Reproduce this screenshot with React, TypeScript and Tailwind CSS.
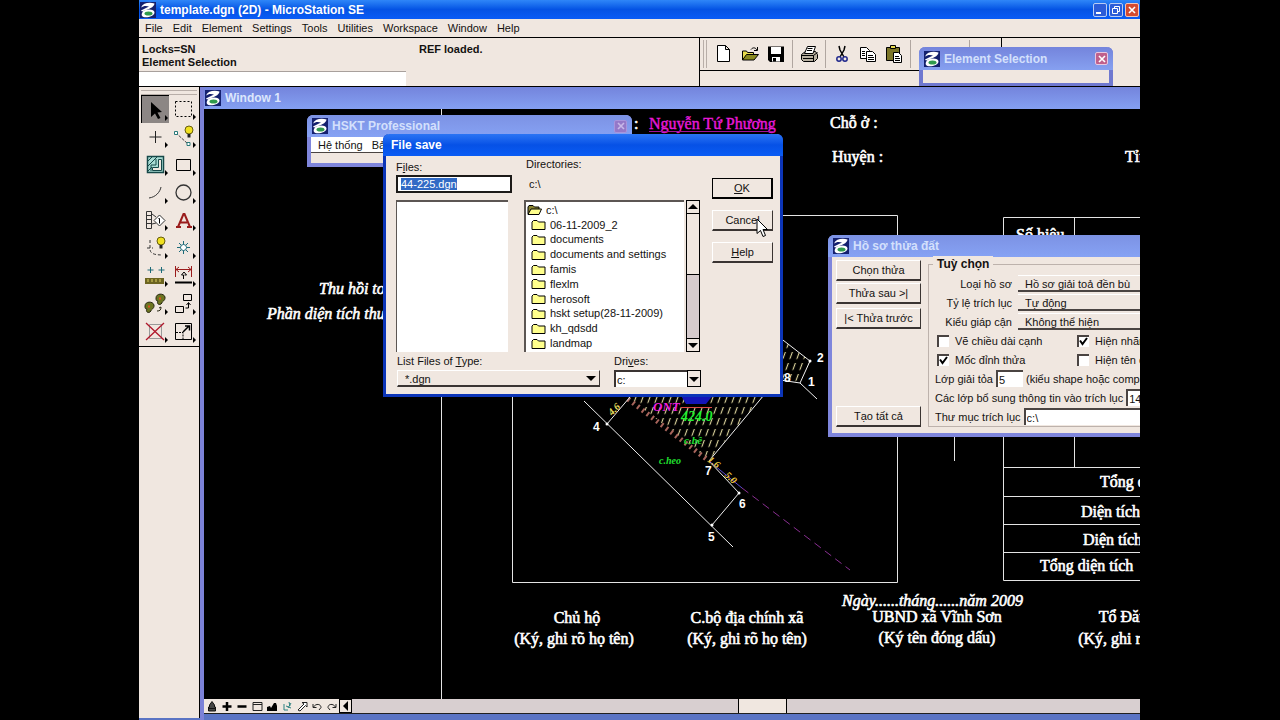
import { useEffect, useRef, useState } from "react";
import type { ReactNode } from "react";

const menus = ["File", "Edit", "Element", "Settings", "Tools", "Utilities", "Workspace", "Window", "Help"];

const folders = [
  "06-11-2009_2",
  "documents",
  "documents and settings",
  "famis",
  "flexlm",
  "herosoft",
  "hskt setup(28-11-2009)",
  "kh_qdsdd",
  "landmap",
];

function Logo() {
  return (
    <svg viewBox="0 0 16 16" className="h-4 w-4 shrink-0" fill="none">
      <rect width="16" height="16" fill="#14206e" />
      <path d="M1 5.500C3 1 9 0 14.500 1.500 14 5.500 9 7 2 9.500L1 8.500 9 4.500C6 3.500 3 4 1 5.500z" fill="#fff" />
      <path d="M4 8.500c5-2 10.500-1 10.500 2 0 3.500-7 5.500-11 4.500-3-1-2-4.500.5-6.500z" fill="#fff" />
      <ellipse cx="8.500" cy="11.500" rx="4" ry="2" fill="#2f9a4c" />
    </svg>
  );
}

function CloseButton({ faded }: { faded?: boolean }) {
  return (
    <button
      aria-label="Close"
      className={
        faded
          ? "flex h-[13px] w-[13px] items-center justify-center rounded-[2px] border border-[#a894dc] bg-[#9478c8]"
          : "flex h-[13px] w-[13px] items-center justify-center rounded-[2px] border border-[#e8c8e0] bg-[#c0608c]"
      }
    >
      <svg viewBox="0 0 8 8" className="h-2 w-2" stroke={faded ? "#c8b8e8" : "#fff"} strokeWidth="1.600">
        <path d="M1 1l6 6M7 1L1 7" />
      </svg>
    </button>
  );
}

function PushButton({ children, heavy }: { children: ReactNode; heavy?: boolean }) {
  return (
    <button
      className={
        heavy
          ? "h-[21px] w-full border border-r-2 border-b-2 border-black bg-[#f0e7e0] text-center"
          : "h-[21px] w-full border border-t-white border-l-white border-r-[#3a3432] border-b-2 border-b-[#3a3432] bg-[#f0e7e0] text-center"
      }
    >
      {children}
    </button>
  );
}

function Folder({ open }: { open?: boolean }) {
  return (
    <svg viewBox="0 0 15 12" className="h-3 w-[15px] shrink-0" stroke="#000" strokeWidth="1">
      {open ? (
        <>
          <path d="M1 10V3l1-1.500h4L7.500 3H12v2" fill="#8a8430" />
          <path d="M1 10.500L4 5h10.500L12 10.500z" fill="#ffff8c" />
        </>
      ) : (
        <path d="M1 10.500V3l1.500-1.500H6L7.500 3H14v7.500z" fill="#ffff8c" />
      )}
    </svg>
  );
}

function Arrow({ d }: { d: string }) {
  return (
    <svg viewBox="0 0 10 10" className="h-[10px] w-[10px] shrink-0" fill="#000">
      <path d={d} />
    </svg>
  );
}

const DOWN = "M0 3h10L5 8z";
const UP = "M0 7h10L5 2z";
const LEFT = "M7 0v10L2 5z";

// Standard toolbar
const toolbar: (null | { name: string; art: ReactNode })[] = [
  { name: "New", art: <path d="M3.500 1.500h8l4 4v12h-12zM11.500 1.500v4h4" fill="#fff" stroke="#000" /> },
  {
    name: "Open",
    art: (
      <g stroke="#000">
        <path d="M2.500 16V7h4l1 1.500h6V11" fill="#e8dc50" />
        <path d="M2.500 16l4-5.500h12L14 16z" fill="#8a8a20" />
        <path d="M11 5.500c2-2.500 4.500-2 6 .5M17.500 3v3.500H14" fill="none" />
      </g>
    ),
  },
  {
    name: "Save",
    art: (
      <g>
        <path d="M2 2.500h16V18H4l-2-2z" fill="#000" />
        <path d="M5 3h10v7H5z" fill="#fff" />
        <path d="M6 13h8v4.500H6z" fill="#fff" />
        <path d="M7 14h3v3.500H7z" fill="#000" />
      </g>
    ),
  },
  null,
  {
    name: "Print",
    art: (
      <g stroke="#000">
        <path d="M2.500 10.500l4-3h10l2 3v4l-3 3h-11l-2-2z" fill="#b8b0a0" />
        <path d="M5.500 9.500l3-7h8l-2.500 7z" fill="#fff" />
        <path d="M8.500 4.500h5M8 6.500h5M2.500 11.500h12l4-3M4 14.500h10M14.500 11.500v6" fill="none" />
      </g>
    ),
  },
  null,
  {
    name: "Cut",
    art: (
      <g fill="none" strokeWidth="1.500">
        <path d="M7 2l1 4 4 7M13 2l-1 4-4 7" stroke="#000" />
        <circle cx="7" cy="15" r="2.200" stroke="#20288c" />
        <circle cx="13" cy="15" r="2.200" stroke="#20288c" />
      </g>
    ),
  },
  {
    name: "Copy",
    art: (
      <g stroke="#000" fill="#fff">
        <path d="M2.500 3.500h6l3 3v8h-9z" />
        <path d="M4 7.500h3M4 9.500h3M4 11.500h3" />
        <path d="M8.500 7.500h6l3 3v7h-9z" />
        <path d="M10 11.500h5M10 13.500h6M10 15.500h6" />
      </g>
    ),
  },
  {
    name: "Paste",
    art: (
      <g stroke="#000">
        <path d="M2.500 3.500h13v13h-13z" fill="#7c7628" />
        <path d="M6.500 1.500h5v3h-5z" fill="#e8dc50" />
        <path d="M9.500 8.500h5l3 3v7h-8z" fill="#fff" />
        <path d="M11 12.500h4M11 14.500h5M11 16.500h5" />
      </g>
    ),
  },
  null,
];

const bulb = (
  <g>
    <circle cx="18" cy="6" r="4" fill="#f0e020" stroke="#665c10" />
    <path d="M16.500 10h3v3.500h-3z" fill="#222" />
  </g>
);

// Main tool frame, two columns read row by row
const tools: { name: string; art: ReactNode }[] = [
  { name: "Element Selection", art: <path d="M8 5l11 10-4.500.5 3 5.500-2.500 1-3-5.500L8 20z" fill="#000" /> },
  { name: "Fence", art: <path d="M4.500 5.500h16v15h-16z" fill="none" stroke="#000" strokeDasharray="2 2" /> },
  { name: "Points", art: <path d="M12.500 7v12M6.500 13h12" stroke="#222" /> },
  {
    name: "Linear Elements",
    art: (
      <g>
        <path d="M5 9l12 11" stroke="#444" strokeDasharray="3 1" />
        <path d="M3.500 7.500h3v3h-3zM16 18.500h3v3h-3z" fill="#fff" stroke="#2a7a7a" />
        {bulb}
      </g>
    ),
  },
  {
    name: "Patterns",
    art: (
      <g fill="none" stroke="#164848">
        <path d="M4.500 4.500h16v16h-16z" fill="#a8dcd4" strokeWidth="1.500" />
        <path d="M4 10l6-6M4 15L15 4M4 20l5-5" />
        <path d="M15.500 7.500h3v11h-9v-3h6z" fill="#f0e7e0" />
        <path d="M13 7v6H8v6" />
      </g>
    ),
  },
  { name: "Polygons", art: <path d="M5.500 7.500h14v11h-14z" fill="none" stroke="#000" /> },
  { name: "Arcs", art: <path d="M18 7c-1 5-5 10-12 11" fill="none" stroke="#333" /> },
  { name: "Ellipses", art: <circle cx="12.500" cy="12.500" r="7.500" fill="none" stroke="#333" strokeWidth="1.300" /> },
  {
    name: "Tags",
    art: (
      <g fill="none" stroke="#333">
        <path d="M3.500 4.500h5v17h-5zM3.500 8.500h5M3.500 12.500h5M3.500 16.500h5M9 7l4 3M9 17l4-1" />
        <path d="M16.500 8l5.500 5.500-5.500 5.500-5.500-5.500z" fill="#fff" />
        <path d="M15.500 11.500h1v5" stroke="#000" />
      </g>
    ),
  },
  {
    name: "Text",
    art: <path d="M7 20l5.500-13h1L19 20M9 15.500h7M5 20h5M16 20h5" fill="none" stroke="#9a1c1c" strokeWidth="2" />,
  },
  {
    name: "Groups",
    art: (
      <g>
        <path d="M7 5v9c0 4 3 6 13 6M4 13h6" fill="none" stroke="#333" strokeDasharray="3 2" />
        {bulb}
      </g>
    ),
  },
  {
    name: "Cells",
    art: (
      <g fill="none" stroke="#1c6a78">
        <path d="M12.500 6v13M6 12.500h13M8 8l9 9M17 8l-9 9" />
        <circle cx="12.500" cy="12.500" r="3" fill="#fff" />
      </g>
    ),
  },
  {
    name: "Measure",
    art: (
      <g>
        <path d="M7.500 4v6M4.500 7h6M18.500 4v6M15.500 7h6" stroke="#1c6a78" />
        <path d="M2 15h19v6H2z" fill="#6c6420" />
        <path d="M5 16v3M9 16v3M13 16v3M17 16v3" stroke="#ddd060" />
      </g>
    ),
  },
  {
    name: "Dimension",
    art: (
      <g fill="none">
        <path d="M4.500 3v11M20.500 3v11M5 6.500h15M8 4L5 6.500 8 9M17 4l3 2.500L17 9" stroke="#9a1c1c" />
        <path d="M4 19.500h17" stroke="#000" strokeWidth="2" />
        <path d="M12.500 16v-4h-2l2.500-3 2.500 3h-2" stroke="#000" />
      </g>
    ),
  },
  {
    name: "Change Attributes",
    art: (
      <g stroke="#282814">
        <path d="M13 7c0-5 8-5 9-1 .5 4-3 4-3 6-2 3-6 1-4-2-2 0-2-1-2-3z" fill="#6c7420" />
        <path d="M2 15c0-5 8-5 9-1 .5 4-3 4-3 6-2 3-6 1-4-2-2 0-2-1-2-3z" fill="#6c7420" />
        <path d="M5 15.500h2M16 7.500h2" stroke="#e05020" strokeWidth="2" />
        <path d="M14 20c3 0 4-1 4-4l-2 1" fill="none" />
      </g>
    ),
  },
  {
    name: "Manipulate",
    art: (
      <g fill="none" stroke="#000">
        <path d="M12.500 3.500h8v6h-8zM4.500 15.500h8v6h-8z" />
        <path d="M17.500 12v5h-3M15.500 14l2-2.500 2 2.500" />
      </g>
    ),
  },
  {
    name: "Delete Element",
    art: (
      <g fill="none">
        <path d="M6.500 5.500h12v14h-12z" stroke="#999" />
        <path d="M3 4l18 17M21 4L3 21" stroke="#b0182c" strokeWidth="1.300" />
      </g>
    ),
  },
  {
    name: "Modify Element",
    art: (
      <g fill="none" stroke="#000">
        <path d="M4.500 4.500h16v16h-16z" />
        <path d="M5 13.500h7v7" strokeDasharray="2 1" />
        <path d="M12 13l6-6M14 7h4.500v4.500" strokeWidth="1.500" />
      </g>
    ),
  },
];

const viewControls: { name: string; art: ReactNode }[] = [
  { name: "Update View", art: <path d="M6 1.500L8.500 5v2h1v4h-7V7h1V5zM3 8.500h6" fill="#444" stroke="#111" /> },
  { name: "Zoom In", art: <path d="M6 2v9M1.500 6.500h9" stroke="#000" strokeWidth="2.500" /> },
  { name: "Zoom Out", art: <path d="M1.500 6.500h9" stroke="#000" strokeWidth="2.500" /> },
  { name: "Window Area", art: <path d="M2 2.500h9v8H2zM2 4.500h9" fill="none" stroke="#222" /> },
  { name: "Fit View", art: <path d="M1 11V7l3-1 1 2 3-5h2l1 3v5z" fill="#000" /> },
  { name: "Rotate View", art: <path d="M3 4v6h4M8 2l1 4M5 6l5 2M10 3L7 8" fill="none" stroke="#2a8080" /> },
  { name: "Pan View", art: <path d="M2 10l6-6-2-1.500h5V7L9.500 5.500 4 11z" fill="#fff" stroke="#222" /> },
  { name: "View Previous", art: <path d="M2 4v3.500h3.500M2.500 7C5 3 10 4 10 7.500L8 10" fill="none" stroke="#222" /> },
  { name: "View Next", art: <path d="M10 4v3.500H6.500M9.500 7C7 3 2 4 2 7.500L4 10" fill="none" stroke="#222" /> },
];

// Parcel plan shown in view 1, in screen units
function Drawing() {
  return (
    <svg className="absolute inset-0 h-full w-full font-['Liberation_Serif',serif] text-base" fill="none" stroke="none">
      <defs>
        <pattern id="hatch" width="7" height="11" patternUnits="userSpaceOnUse" patternTransform="skewX(-20)">
          <path d="M3.500 0v7" stroke="#dcd49c" strokeWidth="1.200" />
        </pattern>
      </defs>
      <g transform="translate(-204 -109)">
        <g stroke="#e4e4e4" strokeWidth="1">
          <path d="M441.500 109V699M512.500 215.500H897.500V582.500H512.500zM954.500 430V461" />
          <path d="M1160 217.500H1003.500V580.500H1160M1074.500 217V467M1003 467.500H1160M1003 496.500H1160M1003 524.500H1160M1003 552.500H1160" />
        </g>

        <path d="M628 397H762L709 460zM770 330L810 361 800 383 780 380z" fill="url(#hatch)" />
        <path d="M628 399L709 461" stroke="#a8655c" strokeWidth="5" strokeDasharray="2 4" />
        <g stroke="#f0f0f0">
          <path d="M584 401L733 547M607 424L630 397M712 525L739 493 709 461 764 395M770 330L810 361 800 383 780 380M800 383L817 399" />
        </g>
        <path d="M709 461L742 488" stroke="#5a4cd0" />
        <path d="M742 488L850 570" stroke="#8a2f92" strokeDasharray="8 5" />
        <path d="M680 394H714L706 404H686z" fill="#1414b8" />
        <path d="M681 407.500H712" stroke="#e04848" />
        <g fill="#fff">
          <circle cx="607" cy="424" r="1.500" />
          <circle cx="712" cy="525" r="1.500" />
          <circle cx="739" cy="493" r="1.500" />
          <circle cx="810" cy="361" r="1.500" />
        </g>

        <g fill="#fff" className="font-['Liberation_Sans',sans-serif] text-xs font-bold">
          <text x="593" y="431">4</text>
          <text x="708" y="541">5</text>
          <text x="739" y="508">6</text>
          <text x="705" y="475">7</text>
          <text x="808" y="386">1</text>
          <text x="817" y="362">2</text>
          <text x="784" y="382">8</text>
        </g>
        <g className="text-[11px] font-bold italic">
          <text x="653" y="411" fill="#f020e0" className="text-[13px]">ONT</text>
          <text x="681" y="421" fill="#20f030" className="text-sm">424.0</text>
          <text x="684" y="444" fill="#20e030">c.bê</text>
          <text x="659" y="464" fill="#20e030" className="text-[10px]">c.heo</text>
          <text x="612" y="416" fill="#f0e060" transform="rotate(-45 612 416)" className="text-[10px]">4.6</text>
          <text x="707" y="461" fill="#f0c840" transform="rotate(38 707 461)" className="text-[10px]">1.6</text>
          <text x="724" y="476" fill="#f0c840" transform="rotate(42 724 476)" className="text-[10px]">5.0</text>
        </g>

        <g fill="#fff" stroke="#fff" strokeWidth="0.600">
          <text x="634" y="129">:</text>
          <text x="830" y="128">Chỗ ở :</text>
          <text x="832" y="162">Huyện :</text>
          <text x="1125" y="162">Tỉnh :</text>
          <text x="1016" y="240">Số hiệu</text>
          <text x="1100" y="487">Tổng diện tích</text>
          <text x="1081" y="517">Diện tích</text>
          <text x="1083" y="545">Diện tích</text>
          <text x="1040" y="571">Tổng diện tích</text>
          <g textAnchor="middle">
            <text x="577" y="623">Chủ hộ</text>
            <text x="574" y="644">(Ký, ghi rõ họ tên)</text>
            <text x="747" y="623">C.bộ địa chính xã</text>
            <text x="747" y="644">(Ký, ghi rõ họ tên)</text>
            <text x="937" y="622">UBND xã Vĩnh Sơn</text>
            <text x="937" y="643">(Ký tên đóng dấu)</text>
            <text x="1137" y="622">Tổ Đăng ký</text>
            <text x="1138" y="644">(Ký, ghi rõ họ tên)</text>
          </g>
          <g className="italic">
            <text x="319" y="294">Thu hồi toàn bộ</text>
            <text x="267" y="319">Phần diện tích thu hồi</text>
            <text x="842" y="606">Ngày......tháng......năm 2009</text>
          </g>
        </g>
        <text x="649" y="129" fill="#e818d8" stroke="#e818d8" strokeWidth="0.400">Nguyễn Tứ Phương</text>
        <path d="M649 131.500H774" stroke="#a0109a" />
      </g>
    </svg>
  );
}

function FileSave() {
  const [name, setName] = useState("44-225.dgn");
  const field = useRef<HTMLInputElement>(null);

  useEffect(() => {
    field.current?.focus();
    field.current?.select();
  }, []);

  return (
    <section className="absolute top-[134px] left-[244px] w-[400px] rounded-t-md border-[3px] border-t-0 border-[#0c35b8] bg-[#f0e7e0]">
      <h2 className="-mx-[3px] flex h-[22px] items-center rounded-t-md bg-linear-to-b from-[#2a74f4] via-[#0651e6] to-[#0a5cf4] px-[8px] text-xs font-bold text-white">
        File save
      </h2>
      <div className="flex gap-3 pr-[7px] pl-[10px]">
        <div className="flex w-[116px] flex-col">
          <label htmlFor="file" className="pt-[3px] leading-4">
            F<u>i</u>les:
          </label>
          <input
            id="file"
            ref={field}
            value={name}
            onChange={(e) => setName(e.target.value)}
            className="h-[18px] border-2 border-[#1c1a18] bg-white px-[3px] outline-none selection:bg-[#316ac5] selection:text-white"
          />
          <ul className="mt-[7px] w-[112px] flex-1 border-t-2 border-l border-[#5c5653] bg-white" />
        </div>
        <div className="flex w-[176px] flex-col">
          <span className="pl-[2px] leading-4">Directories:</span>
          <span className="py-[4px] pl-[5px] leading-4">c:\</span>
          <div className="mt-[4px] flex h-[152px]">
            <ul className="grid flex-1 grid-rows-10 border-t-2 border-l-2 border-[#5c5653] bg-white py-[1px]">
              <li className="flex items-center gap-1 pl-[1px] leading-none">
                <Folder open /> c:\
              </li>
              {folders.map((f) => (
                <li key={f} className="flex items-center gap-1 pl-[5px] leading-none">
                  <Folder /> {f}
                </li>
              ))}
            </ul>
            <div className="ml-[2px] flex w-[14px] flex-col border border-black bg-[#d6cbcd]">
              <button aria-label="Scroll up" className="flex h-[13px] items-center justify-center border-b border-black bg-[#f0e7e0]">
                <Arrow d={UP} />
              </button>
              <div className="h-[61px] border-b border-black bg-[#f0e7e0]" />
              <button aria-label="Scroll down" className="mt-auto flex h-[13px] items-center justify-center border-t border-black bg-[#f0e7e0]">
                <Arrow d={DOWN} />
              </button>
            </div>
          </div>
        </div>
        <div className="flex flex-1 flex-col gap-[11px] pt-[22px]">
          <PushButton heavy>
            <u>O</u>K
          </PushButton>
          <PushButton>Cancel</PushButton>
          <PushButton>
            <u>H</u>elp
          </PushButton>
        </div>
      </div>
      <div className="flex gap-[14px] pt-[1px] pb-[7px] pl-[11px]">
        <div className="flex w-[203px] flex-col">
          <label htmlFor="type" className="leading-[17px]">
            List Files of <u>T</u>ype:
          </label>
          <div className="relative">
            <select id="type" className="block h-[17px] w-full appearance-none border border-t-white border-l-white border-r-[#3a3432] border-b-2 border-b-[#3a3432] pl-[7px] outline-none">
              <option>*.dgn</option>
            </select>
            <span className="pointer-events-none absolute top-[3px] right-[4px]">
              <Arrow d={DOWN} />
            </span>
          </div>
        </div>
        <div className="flex w-[87px] flex-col">
          <label htmlFor="drive" className="leading-[17px]">
            Dri<u>v</u>es:
          </label>
          <div className="relative">
            <select id="drive" className="block h-[17px] w-full appearance-none border-t-2 border-l-2 border-[#3a3432] bg-white pl-[1px] outline-none">
              <option>c:</option>
            </select>
            <span className="pointer-events-none absolute top-0 right-0 flex h-[17px] w-[14px] items-center justify-center border border-black bg-[#f0e7e0]">
              <Arrow d={DOWN} />
            </span>
          </div>
        </div>
      </div>
    </section>
  );
}

function Check({ label, on }: { label: string; on?: boolean }) {
  const [checked, setChecked] = useState(!!on);
  return (
    <label className="flex items-center gap-[6px] whitespace-nowrap">
      <span className="relative h-[12px] w-[12px]">
        <input
          type="checkbox"
          checked={checked}
          onChange={(e) => setChecked(e.target.checked)}
          className="block h-[12px] w-[12px] appearance-none border-t-2 border-l-2 border-[#4a4442] bg-white"
        />
        {checked && (
          <svg viewBox="0 0 12 12" className="pointer-events-none absolute inset-0 h-[12px] w-[12px]" fill="none" stroke="#000" strokeWidth="2">
            <path d="M3 5.500L5.500 9 10 3" />
          </svg>
        )}
      </span>
      {label}
    </label>
  );
}

function Pick({ id, label, value }: { id: string; label: string; value: string }) {
  return (
    <div className="flex h-[19px] items-center gap-[6px]">
      <label htmlFor={id} className="w-[77px] text-right whitespace-nowrap">
        {label}
      </label>
      <select id={id} className="h-[17px] flex-1 appearance-none border-t border-b-2 border-t-white border-b-[#4a4442] pl-[7px]">
        <option>{value}</option>
      </select>
    </div>
  );
}

function ParcelFile() {
  const box = "h-[17px] border-t-2 border-l-2 border-[#4a4442] bg-white px-[1px] outline-none";
  return (
    <section className="absolute top-[235px] left-[689px] w-[352px] rounded-t-md border-4 border-t-0 border-[#7f86dc] bg-[#f0e7e0]">
      <h2 className="-mx-[4px] flex h-[22px] items-center gap-1 rounded-t-md bg-linear-to-b from-[#7c92e4] to-[#86a2f4] px-[5px] text-xs font-bold text-[#d4e0fc]">
        <Logo /> Hồ sơ thửa đất
      </h2>
      <div className="flex gap-[7px] px-[4px] pt-[3px] pb-[6px]">
        <div className="flex w-[85px] shrink-0 flex-col">
          <PushButton>Chọn thửa</PushButton>
          <div className="pt-[2px] pb-[4px]">
            <PushButton>Thửa sau &gt;|</PushButton>
          </div>
          <PushButton>|&lt; Thửa trước</PushButton>
          <div className="mt-auto">
            <PushButton>Tạo tất cả</PushButton>
          </div>
        </div>
        <fieldset className="relative mt-[4px] min-w-0 flex-1 border border-[#bdb2ac] px-[6px] pt-[9px]">
          <legend className="absolute -top-[9px] left-[4px] bg-[#f0e7e0] px-1 text-xs font-bold">Tuỳ chọn</legend>
          <Pick id="kind" label="Loại hồ sơ" value="Hồ sơ giải toả đền bù" />
          <Pick id="scale" label="Tỷ lệ trích lục" value="Tự động" />
          <Pick id="adjacent" label="Kiểu giáp cận" value="Không thể hiện" />
          <div className="grid grid-cols-[140px_1fr] pl-[2px] *:h-[19px]">
            <Check label="Vẽ chiều dài cạnh" />
            <Check label="Hiện nhãn" on />
            <Check label="Mốc đỉnh thửa" on />
            <Check label="Hiện tên chủ" />
          </div>
          <div className="flex h-[19px] items-center gap-[3px] whitespace-nowrap">
            <label htmlFor="layer">Lớp giải tỏa</label>
            <input id="layer" defaultValue="5" className={`${box} w-[27px]`} />
            <span>(kiểu shape hoặc complex)</span>
          </div>
          <div className="flex h-[19px] items-center gap-[3px] whitespace-nowrap">
            <label htmlFor="extra">Các lớp bổ sung thông tin vào trích lục</label>
            <input id="extra" defaultValue="14,15" className={`${box} w-0 flex-1`} />
          </div>
          <div className="flex h-[19px] items-center gap-[3px] whitespace-nowrap">
            <label htmlFor="folder">Thư mục trích lục</label>
            <input id="folder" defaultValue="c:\" className={`${box} w-0 flex-1`} />
          </div>
        </fieldset>
      </div>
    </section>
  );
}

export default function App() {
  return (
    <div className="flex h-screen bg-black pr-[140px] pl-[139px] font-['Liberation_Sans',sans-serif] text-[11px] leading-4 text-[#141210]">
      <main className="relative flex min-w-0 flex-1 flex-col overflow-hidden bg-[#f0e7e0]">
        <header className="flex h-[19px] shrink-0 items-center gap-1 bg-linear-to-b from-[#2f86f8] via-[#0553e4] to-[#0a5cf6] px-[1px] text-xs font-bold text-white">
          <Logo />
          <h1 className="flex-1">template.dgn (2D) - MicroStation SE</h1>
          <div className="flex gap-[2px]">
            <button aria-label="Minimize" className="flex h-[14px] w-[14px] items-end rounded-[2px] border border-[#b8ccf4] bg-[#2c5cd8] p-[2px]">
              <span className="h-[2px] w-[5px] bg-white" />
            </button>
            <button aria-label="Restore" className="flex h-[14px] w-[14px] items-center justify-center rounded-[2px] border border-[#b8ccf4] bg-[#2c5cd8]">
              <svg viewBox="0 0 10 10" className="h-[10px] w-[10px]" fill="none" stroke="#fff">
                <path d="M3.500 3V1.500h5v5H7M1.500 3.500h5v5h-5z" />
              </svg>
            </button>
            <button aria-label="Close" className="flex h-[14px] w-[14px] items-center justify-center rounded-[2px] border border-[#f0c4b8] bg-[#d44a30]">
              <svg viewBox="0 0 8 8" className="h-2 w-2" stroke="#fff" strokeWidth="1.600">
                <path d="M1 1l6 6M7 1L1 7" />
              </svg>
            </button>
          </div>
        </header>

        <nav className="flex h-[19px] shrink-0 items-center gap-[10px] border-b border-black px-[6px]">
          {menus.map((m) => (
            <button key={m}>{m}</button>
          ))}
        </nav>

        {/* Status area and standard toolbar */}
        <div className="flex h-[49px] shrink-0 border-b border-black">
          <div className="flex w-[560px] font-bold">
            <div className="flex w-[267px] flex-col">
              <div className="px-[3px] pt-[5px] leading-[13px]">
                <p>Locks=SN</p>
                <p>Element Selection</p>
              </div>
              <input aria-label="Key-in" className="mt-[2px] min-h-0 flex-1 border-t border-[#a8a09c] bg-white outline-none" />
            </div>
            <p className="px-[13px] pt-[5px] leading-[13px]">REF loaded.</p>
          </div>
          <div className="flex-1 border-l border-black">
            <div className="flex h-[33px] w-[302px] items-center border-r border-b border-black">
              <span className="mr-[4px] ml-[3px] h-[28px] w-[4px] border-r border-l border-[#b8aea8]" />
              {toolbar.map((t, i) =>
                t ? (
                  <button key={t.name} aria-label={t.name} className="flex w-[26px] justify-center">
                    <svg viewBox="0 0 20 20" className="h-5 w-5" fill="none">
                      {t.art}
                    </svg>
                  </button>
                ) : (
                  <span key={i} className="mx-[3px] h-[28px] w-px bg-[#b0a6a0]" />
                ),
              )}
              <span className="ml-[55px] h-[28px] w-px bg-[#b0a6a0]" />
            </div>
          </div>
        </div>

        <div className="flex min-h-0 flex-1 bg-[#5a74c4]">
          <aside className="mb-[2px] w-[61px] shrink-0 border-r border-black bg-[#f0e7e0]">
            <div className="border-b border-black px-[2px] pt-[3px] pb-[1px]">
              <div className="h-[5px] border-t border-b border-[#b8aea8]" />
              <div className="grid h-[250px] grid-cols-2 grid-rows-9">
                {tools.map((t, i) => (
                  <button
                    key={t.name}
                    aria-label={t.name}
                    className={
                      i === 0
                        ? "flex items-center justify-center border-t border-l border-black bg-[#8c8684]"
                        : "flex items-center justify-center"
                    }
                  >
                    <svg viewBox="0 0 25 25" className="h-[25px] w-[25px]">
                      {t.art}
                      <path d="M22 18v6l3-3z" fill="#000" />
                    </svg>
                  </button>
                ))}
              </div>
            </div>
          </aside>

          {/* View window */}
          <section className="flex min-w-0 flex-1 flex-col border-l-4 border-[#7c82d8]">
            <h2 className="flex h-[22px] shrink-0 items-center gap-1 bg-linear-to-b from-[#7484dc] to-[#84a0f2] pl-[1px] text-xs font-bold text-[#dce6fc]">
              <Logo /> Window 1
            </h2>
            <div className="relative min-h-0 flex-1 overflow-hidden bg-black">
              <Drawing />
            </div>
            <div className="flex h-[15px] shrink-0 border-b border-[#202020] bg-[#f0e7e0]">
              <div className="flex items-center">
                {viewControls.map((v) => (
                  <button key={v.name} aria-label={v.name} className="flex w-[15px] justify-center">
                    <svg viewBox="0 0 12 13" className="h-[13px] w-[12px]">
                      {v.art}
                    </svg>
                  </button>
                ))}
              </div>
              <button aria-label="Scroll left" className="flex w-[13px] items-center justify-center border border-black">
                <Arrow d={LEFT} />
              </button>
              <div className="flex flex-1 bg-[#d8cfd0]">
                <div className="w-[49%]" />
                <div className="w-[49px] border-r border-l border-black bg-[#f0e7e0]" />
              </div>
            </div>
            <div className="h-[6px] shrink-0 bg-[#5a74c4]" />
          </section>
        </div>

        {/* Tool settings */}
        <section className="absolute top-[47px] left-[780px] h-[39px] w-[194px] rounded-t-md border-x-4 border-[#6f78d0] bg-[#f0e7e0]">
          <h2 className="-mx-[4px] flex h-[23px] items-center gap-1 rounded-t-md bg-linear-to-b from-[#7484dc] to-[#86a0f0] px-[5px] text-xs font-bold text-[#d4e0fc]">
            <Logo />
            <span className="flex-1">Element Selection</span>
            <CloseButton />
          </h2>
          <div className="h-[13px]" />
          <div className="h-[3px] bg-[#6f78d0]" />
        </section>

        <section className="absolute top-[115px] left-[168px] w-[325px] rounded-t-md border-4 border-t-0 border-[#7f86dc] bg-[#f0e7e0]">
          <h2 className="-mx-[4px] flex h-[22px] items-center gap-1 rounded-t-md bg-linear-to-b from-[#7c92e4] to-[#86a2f4] px-[5px] text-xs font-bold text-[#d4e0fc]">
            <Logo />
            <span className="flex-1">HSKT Professional</span>
            <CloseButton faded />
          </h2>
          <nav className="flex h-[16px] items-center gap-[9px] border-b border-[#4a4442] bg-white px-[7px]">
            <button>Hệ thống</button>
            <button>Bản đồ</button>
          </nav>
          <div className="h-[10px]" />
        </section>

        <ParcelFile />
        <FileSave />

        {/* Mouse pointer */}
        <svg viewBox="0 0 12 20" className="pointer-events-none absolute top-[218px] left-[617px] h-5 w-3" fill="#fff" stroke="#000">
          <path d="M1 1v14.500l3.500-3 2.500 6 2.500-1-2.500-6H11.500z" />
        </svg>
      </main>
    </div>
  );
}
